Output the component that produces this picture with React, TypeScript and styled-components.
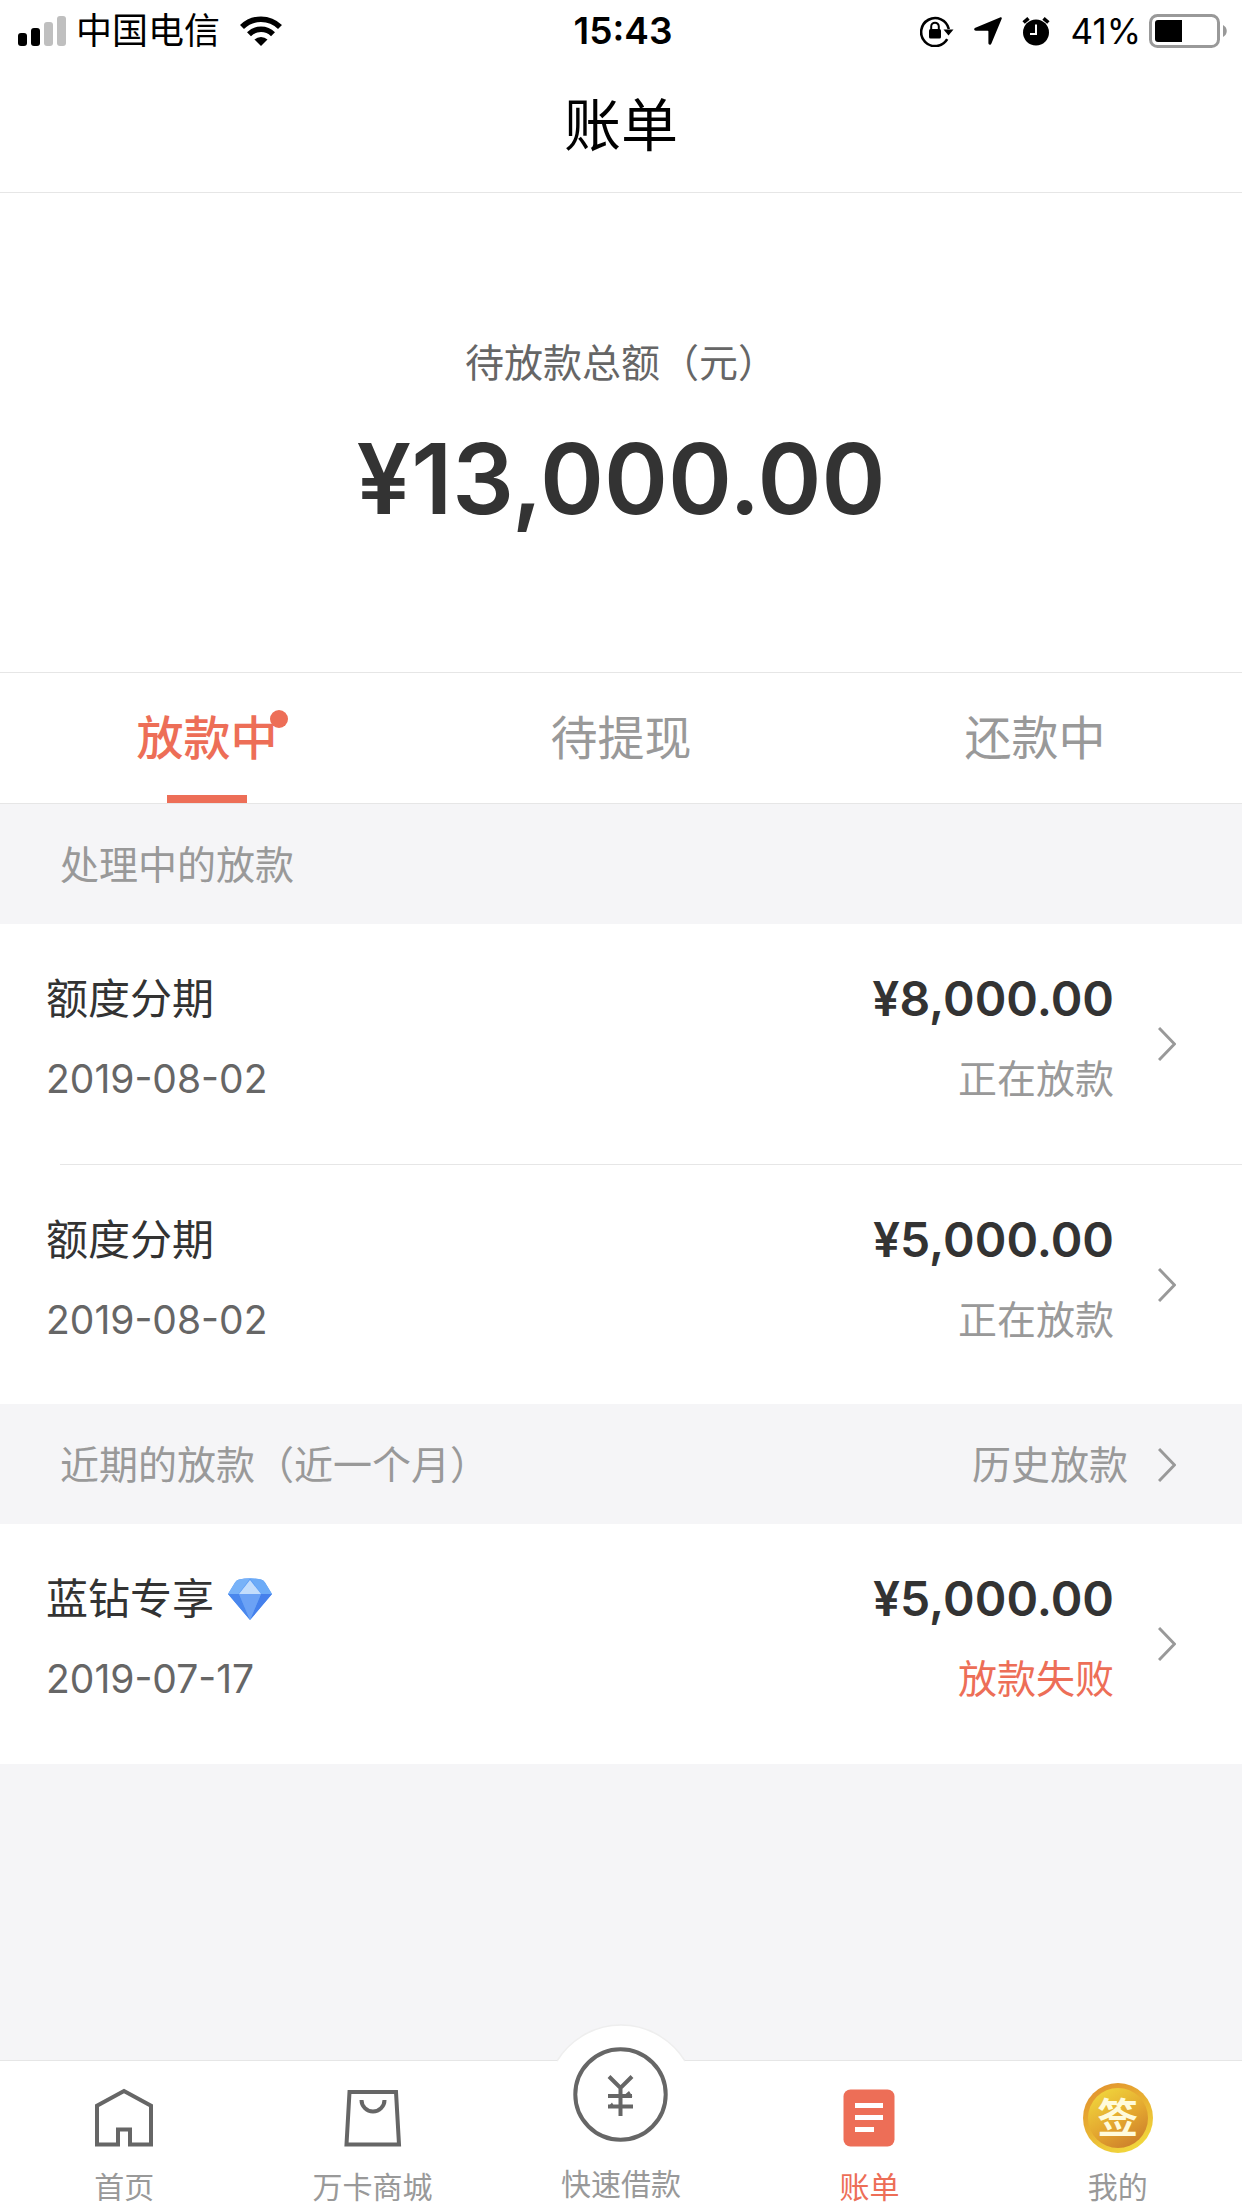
import React from "react";
import styled, { createGlobalStyle } from "styled-components";

const color = {
  accent: "#ed6e57",
  ink: "#333333",
  sub: "#666666",
  muted: "#999999",
  line: "#e6e6e6",
  panel: "#f5f5f7",
};

const GlobalStyle = createGlobalStyle`
  * { box-sizing: border-box; }
  body {
    margin: 0;
    background: ${color.panel};
    font-family: Inter, "Noto Sans CJK SC", sans-serif;
    color: ${color.ink};
  }
  a { color: inherit; text-decoration: none; }
  button { font: inherit; color: inherit; background: none; border: 0; padding: 0; cursor: pointer; }
  svg { display: block; flex: none; }
`;

const Page = styled.div`
  min-height: 100vh;
  display: flex;
  flex-direction: column;
`;

const Top = styled.header`
  background: #fff;
  border-bottom: 1px solid ${color.line};
`;

const StatusBar = styled.div`
  display: grid;
  grid-template-columns: 1fr auto 1fr;
  align-items: center;
  height: 62px;
  padding: 0 14px 0 18px;
  color: #000;
  font-size: 36px;
  line-height: 60px;
`;

const StatusLeft = styled.div`
  display: flex;
  align-items: center;
  gap: 10px;
`;

const Carrier = styled.span`
  margin-right: 10px;
`;

const Clock = styled.time`
  font-weight: 600;
  font-size: 37px;
`;

const StatusRight = styled.div`
  display: flex;
  align-items: center;
  justify-content: flex-end;
  gap: 20px;
`;

const Charge = styled.div`
  display: flex;
  align-items: center;
  gap: 8px;
  font-size: 35px;
`;

const PageTitle = styled.h1`
  margin: 0;
  height: 130px;
  padding-top: 24px;
  font-size: 57px;
  line-height: 80px;
  font-weight: 400;
  text-align: center;
  color: #000;
`;

const Summary = styled.section`
  display: flex;
  flex-direction: column;
  align-items: center;
  gap: 26px;
  padding: 140px 0 133px;
  background: #fff;
  border-bottom: 1px solid ${color.line};
`;

const SummaryLabel = styled.div`
  font-size: 39px;
  line-height: 60px;
  color: ${color.sub};
`;

const SummaryAmount = styled.div`
  font-size: 97px;
  line-height: 120px;
  font-weight: 600;
`;

const Tabs = styled.div`
  display: grid;
  grid-template-columns: repeat(3, 1fr);
  height: 131px;
  background: #fff;
  border-bottom: 1px solid ${color.line};
`;

const Tab = styled.button<{ $active?: boolean }>`
  display: flex;
  flex-direction: column;
  align-items: center;
  justify-content: space-between;
  color: ${(p) => (p.$active ? color.accent : color.muted)};
  font-weight: ${(p) => (p.$active ? 500 : 400)};
  &::after {
    content: "";
    width: 80px;
    height: 8px;
    background: ${(p) => (p.$active ? color.accent : "transparent")};
  }
`;

const TabText = styled.span`
  position: relative;
  padding-top: 30px;
  font-size: 47px;
  line-height: 70px;
`;

const Dot = styled.i`
  position: absolute;
  top: 37px;
  right: -10px;
  width: 18px;
  height: 18px;
  border-radius: 50%;
  background: ${color.accent};
`;

const SectionHead = styled.div`
  display: flex;
  align-items: center;
  justify-content: space-between;
  height: 120px;
  padding: 2px 66px 0 60px;
  font-size: 39px;
  line-height: 60px;
  color: ${color.muted};
`;

const SectionTitle = styled.h2`
  margin: 0;
  font: inherit;
`;

const HistoryLink = styled.a`
  display: flex;
  align-items: center;
  gap: 30px;
`;

const List = styled.ul`
  list-style: none;
  margin: 0;
  padding: 0;
  background: #fff;
`;

const Item = styled.li`
  & + &::before {
    content: "";
    display: block;
    height: 1px;
    margin-left: 60px;
    background: ${color.line};
  }
`;

const Loan = styled.a`
  display: flex;
  align-items: center;
  height: 240px;
  padding: 0 66px 0 46px;
  ${Item} + ${Item} & { height: 239px; }
`;

const Column = styled.div<{ $end?: boolean }>`
  display: flex;
  flex-direction: column;
  gap: 20px;
  padding-bottom: 10px;
  line-height: 60px;
  ${(p) => (p.$end ? "align-items: flex-end; margin-left: auto; margin-right: 44px;" : "")}
`;

const LoanName = styled.span`
  display: flex;
  align-items: center;
  gap: 14px;
  font-size: 42px;
`;

const LoanDate = styled.time`
  font-size: 39px;
  color: ${color.sub};
`;

const LoanAmount = styled.span`
  font-size: 48px;
  font-weight: 600;
`;

const LoanState = styled.span<{ $failed?: boolean }>`
  font-size: 39px;
  color: ${(p) => (p.$failed ? color.accent : color.muted)};
`;

const TabBar = styled.nav`
  position: sticky;
  bottom: 0;
  margin-top: auto;
  display: grid;
  grid-template-columns: repeat(5, 1fr);
  grid-template-rows: minmax(0, 1fr);
  height: 148px;
  background: #fff;
  border-top: 1px solid ${color.line};
`;

const NavItem = styled.a<{ $active?: boolean; $raised?: boolean }>`
  position: relative;
  display: flex;
  flex-direction: column;
  align-items: center;
  justify-content: flex-end;
  gap: ${(p) => (p.$raised ? 24 : 16)}px;
  padding-bottom: ${(p) => (p.$raised ? 6 : 3)}px;
  font-size: 30px;
  line-height: 36px;
  color: ${(p) => (p.$active ? color.accent : color.muted)};
`;

const NavText = styled.span`
  position: relative;
`;

const Bump = styled.svg`
  position: absolute;
  top: -37px;
  left: 50%;
  transform: translateX(-50%);
`;

const RaisedIcon = styled.svg`
  position: relative;
`;

const Coin = styled.span`
  display: grid;
  place-items: center;
  width: 70px;
  height: 70px;
  border-radius: 50%;
  border: 5px solid transparent;
  background:
    linear-gradient(150deg, #f0d43c 10%, #e3a52f 55%, #c97a2b 95%) padding-box,
    linear-gradient(150deg, #e3982f 15%, #e9b433 50%, #f1d63c 85%) border-box;
  color: #fffbdc;
  font-size: 41px;
  line-height: 60px;
  font-weight: 700;
`;

const SignalIcon = () => (
  <svg width="48" height="30" viewBox="0 0 48 30" aria-hidden="true">
    <rect x="0" y="17" width="9" height="13" rx="3" />
    <rect x="13" y="12" width="9" height="18" rx="3" />
    <rect x="26" y="6" width="9" height="24" rx="3" fill="#bfbfbf" />
    <rect x="39" y="0" width="9" height="30" rx="3" fill="#bfbfbf" />
  </svg>
);

const WifiIcon = () => (
  <svg width="42" height="30" viewBox="0 0 42 30" aria-hidden="true">
    <g fill="none" stroke="#000" strokeWidth="5.6">
      <path d="M2 11a27 27 0 0 1 38 0" />
      <path d="M9 18.200a17 17 0 0 1 24 0" />
    </g>
    <path d="M21 30l-6.500-6.500a9.500 9.500 0 0 1 13 0z" />
  </svg>
);

const LockIcon = () => (
  <svg width="34" height="32" viewBox="0 0 34 32" aria-hidden="true">
    <path d="M27.200 24.200A14 14 0 1 1 28.800 14" fill="none" stroke="#000" strokeWidth="2.600" />
    <path d="M23.500 14.500h10l-5 6z" />
    <rect x="9" y="14" width="12" height="9.500" rx="1.500" />
    <path d="M11.200 15v-3.500a3.800 3.800 0 0 1 7.600 0V15" fill="none" stroke="#000" strokeWidth="2" />
  </svg>
);

const LocationIcon = () => (
  <svg width="28" height="28" viewBox="0 0 28 28" aria-hidden="true">
    <path d="M26 .4c1.300-.6 2.200.4 1.600 1.700L17.400 26.500c-.7 1.800-3 1.500-3-.4V14.400c0-.5-.2-.7-.7-.7H1.900c-2 0-2.400-2.200-.5-3z" />
  </svg>
);

const AlarmIcon = () => (
  <svg width="28" height="30" viewBox="0 0 28 30" aria-hidden="true">
    <circle cx="14" cy="16.500" r="13" />
    <path d="M1.600 6.500L6.500 2.300M26.400 6.500L21.500 2.300" stroke="#000" strokeWidth="3.600" />
    <path d="M14 8.500v9.500H8" fill="none" stroke="#fff" strokeWidth="2" />
  </svg>
);

const BatteryIcon = () => (
  <svg width="79" height="34" viewBox="0 0 79 34" aria-hidden="true">
    <rect x="1.500" y="1.500" width="68" height="31" rx="7" fill="none" stroke="#999" strokeWidth="3" />
    <path d="M74 11c5 2.500 5 9.500 0 12z" fill="#999" />
    <path d="M9 6h24v22H9a3 3 0 0 1-3-3V9a3 3 0 0 1 3-3z" />
  </svg>
);

const Chevron = () => (
  <svg width="18" height="34" viewBox="0 0 18 34" aria-hidden="true">
    <path d="M1 1l15.500 16L1 33" fill="none" stroke="#999" strokeWidth="3" />
  </svg>
);

const Diamond = () => (
  <svg width="44" height="42" viewBox="0 0 44 42" aria-hidden="true">
    <path d="M11 1.500Q22-.8 33 1.500Q35.500 2 37 4.500L44 16L22 42L0 16L7 4.500Q8.500 2 11 1.500z" fill="#5b9cf5" />
    <path d="M22 .5L10.500 16H0L7 4.500Q8.500 2 11 1.500Q16 .4 22 .5z" fill="#78b2f8" />
    <path d="M22 .5L33.500 16H44L37 4.500Q35.500 2 33 1.500Q28 .4 22 .5z" fill="#6cabf7" />
    <path d="M22 2L33 16H11z" fill="#c3ddfc" />
    <path d="M0 16h11l11 26z" fill="#4a87ed" />
    <path d="M44 16H33L22 42z" fill="#4580ec" />
    <path d="M11 16h22L22 42z" fill="#6ca2f5" />
  </svg>
);

const HomeIcon = () => (
  <svg width="70" height="70" viewBox="0 0 70 70" fill="none" stroke="#666" strokeWidth="4" aria-hidden="true">
    <path d="M8 61.500V22.700L35 8L62 22.700V61.500H41V46.500H29V61.500z" />
  </svg>
);

const BagIcon = () => (
  <svg width="70" height="70" viewBox="0 0 70 70" fill="none" stroke="#666" strokeWidth="4" aria-hidden="true">
    <path d="M11.500 9h46.500l3 52.500H8.500z" />
    <path d="M23.500 17a11.500 11.500 0 0 0 23 0" />
  </svg>
);

const BillIcon = () => (
  <svg width="70" height="70" viewBox="0 0 70 70" aria-hidden="true">
    <rect x="9.500" y="6.500" width="51" height="57" rx="7" fill={color.accent} />
    <path d="M21 22.500h28M21 34.500h28M21 46.500h19" stroke="#fff" strokeWidth="5" />
  </svg>
);

const YuanIcon = () => (
  <RaisedIcon width="95" height="95" viewBox="0 0 95 95" fill="none" stroke="#666" strokeWidth="4" aria-hidden="true">
    <circle cx="47.500" cy="47.500" r="45.200" />
    <path d="M36 29.500l11.500 11.500L59 29.500M47.500 41v28" />
    <path d="M35 49h24M35 59.500h25" />
    <path d="M52 47.500l4-3.500 3.500 5.500zM42 61l-3-5.500-3.500 4z" fill="#666" stroke="none" />
  </RaisedIcon>
);

type LoanData = { name: string; date: string; amount: string; state: string; vip?: boolean; failed?: boolean };

const processing: LoanData[] = [
  { name: "额度分期", date: "2019-08-02", amount: "¥8,000.00", state: "正在放款" },
  { name: "额度分期", date: "2019-08-02", amount: "¥5,000.00", state: "正在放款" },
];

const recent: LoanData[] = [
  { name: "蓝钻专享", date: "2019-07-17", amount: "¥5,000.00", state: "放款失败", vip: true, failed: true },
];

const LoanList = ({ loans }: { loans: LoanData[] }) => (
  <List>
    {loans.map((loan, i) => (
      <Item key={i}>
        <Loan href="#loan">
          <Column>
            <LoanName>
              {loan.name}
              {loan.vip && <Diamond />}
            </LoanName>
            <LoanDate>{loan.date}</LoanDate>
          </Column>
          <Column $end>
            <LoanAmount>{loan.amount}</LoanAmount>
            <LoanState $failed={loan.failed}>{loan.state}</LoanState>
          </Column>
          <Chevron />
        </Loan>
      </Item>
    ))}
  </List>
);

export default function App() {
  return (
    <Page>
      <GlobalStyle />
      <Top>
        <StatusBar>
          <StatusLeft>
            <SignalIcon />
            <Carrier>中国电信</Carrier>
            <WifiIcon />
          </StatusLeft>
          <Clock>15:43</Clock>
          <StatusRight>
            <LockIcon />
            <LocationIcon />
            <AlarmIcon />
            <Charge>
              41%
              <BatteryIcon />
            </Charge>
          </StatusRight>
        </StatusBar>
        <PageTitle>账单</PageTitle>
      </Top>
      <main>
        <Summary>
          <SummaryLabel>待放款总额（元）</SummaryLabel>
          <SummaryAmount>¥13,000.00</SummaryAmount>
        </Summary>
        <Tabs role="tablist">
          <Tab role="tab" aria-selected="true" $active>
            <TabText>
              放款中
              <Dot />
            </TabText>
          </Tab>
          <Tab role="tab" aria-selected="false">
            <TabText>待提现</TabText>
          </Tab>
          <Tab role="tab" aria-selected="false">
            <TabText>还款中</TabText>
          </Tab>
        </Tabs>
        <SectionHead>
          <SectionTitle>处理中的放款</SectionTitle>
        </SectionHead>
        <LoanList loans={processing} />
        <SectionHead>
          <SectionTitle>近期的放款（近一个月）</SectionTitle>
          <HistoryLink href="#history">
            历史放款
            <Chevron />
          </HistoryLink>
        </SectionHead>
        <LoanList loans={recent} />
      </main>
      <TabBar>
        <NavItem href="#home">
          <HomeIcon />
          <NavText>首页</NavText>
        </NavItem>
        <NavItem href="#mall">
          <BagIcon />
          <NavText>万卡商城</NavText>
        </NavItem>
        <NavItem href="#borrow" $raised>
          <Bump width="128" height="40" viewBox="0 0 128 40" aria-hidden="true">
            <path d="M0 37A75 75 0 0 1 128 37V40H0z" fill="#fff" />
            <path d="M0 37A75 75 0 0 1 128 37" fill="none" stroke="#eeeeee" strokeWidth="1.500" />
          </Bump>
          <YuanIcon />
          <NavText>快速借款</NavText>
        </NavItem>
        <NavItem href="#bill" aria-current="page" $active>
          <BillIcon />
          <NavText>账单</NavText>
        </NavItem>
        <NavItem href="#me">
          <Coin>签</Coin>
          <NavText>我的</NavText>
        </NavItem>
      </TabBar>
    </Page>
  );
}
